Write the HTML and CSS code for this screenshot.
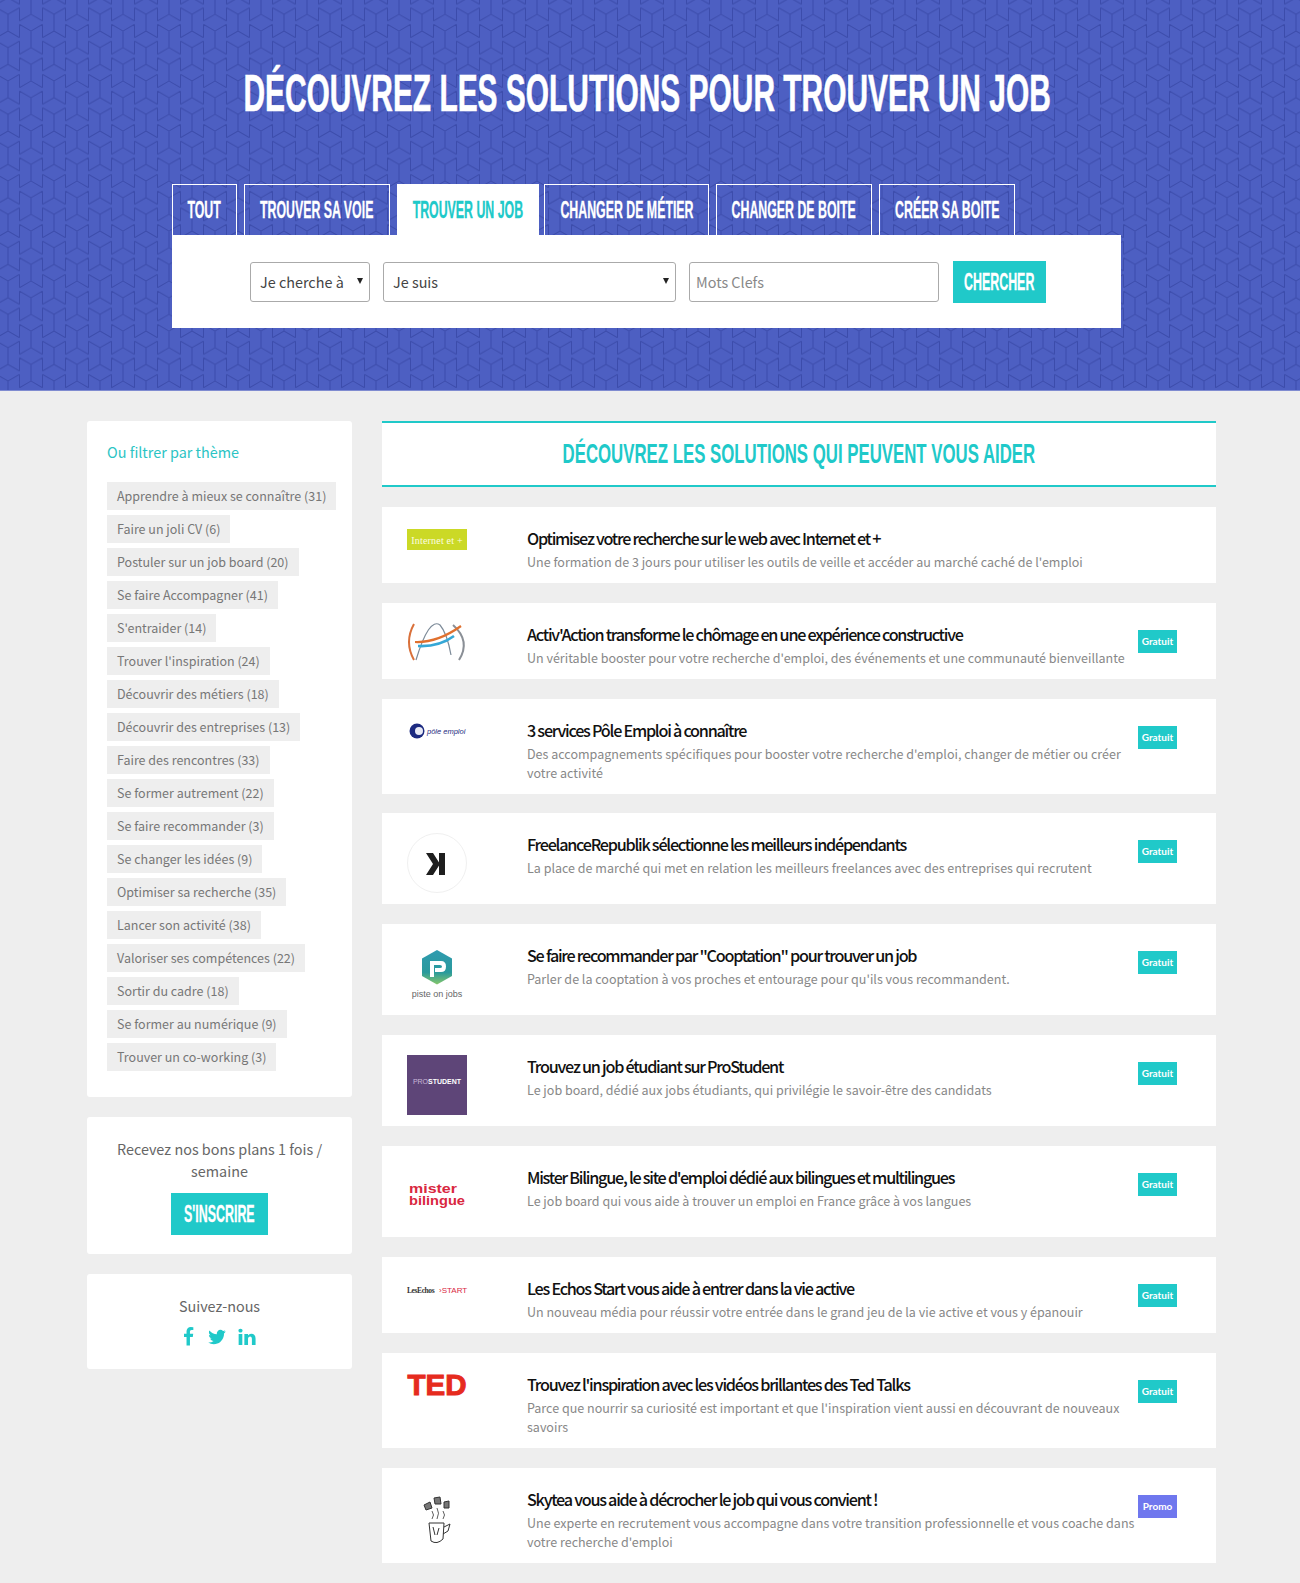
FILE: index.html
```html
<!DOCTYPE html>
<html lang="fr">
<head>
<meta charset="utf-8">
<title>Trouver un job</title>
<link rel="stylesheet" href="styles.css">
</head>
<body>
<header class="hero">
  <svg class="hero-pattern" width="100%" height="100%" aria-hidden="true">
    <defs>
      <path id="tri" fill="none" stroke="#3c4cab" stroke-width="1" d="M-11.5 -6.64L0 0L11.5 -6.64M0 0V16.67M-11.5 23.3L0 16.67L11.5 23.3M11.5 -6.64V6.64M-11.5 -6.64V6.64"/>
      <pattern id="ys" width="46" height="33.34" patternUnits="userSpaceOnUse" patternTransform="translate(31 31)">
        <use href="#tri" x="0" y="0"/><use href="#tri" x="46" y="0"/>
        <use href="#tri" x="0" y="33.34"/><use href="#tri" x="46" y="33.34"/>
        <use href="#tri" x="0" y="-33.34"/><use href="#tri" x="46" y="-33.34"/>
        <use href="#tri" x="23" y="16.67"/><use href="#tri" x="23" y="-16.67"/>
        <use href="#tri" x="23" y="50.01"/><use href="#tri" x="-23" y="16.67"/><use href="#tri" x="69" y="16.67"/>
      </pattern>
      <linearGradient id="pisteg" x1="0" y1="0" x2="0" y2="1">
        <stop offset="0" stop-color="#2f9bb0"/><stop offset=".65" stop-color="#2a9a9c"/><stop offset="1" stop-color="#86c76a"/>
      </linearGradient>
    </defs>
    <rect width="100%" height="100%" fill="url(#ys)"/>
  </svg>
  <h1 class="hero-title"><span class="sq sq-h1">DÉCOUVREZ LES SOLUTIONS POUR TROUVER UN JOB</span></h1>
  <nav class="tabs">
    <a class="tab"><span class="sq sq-tab">TOUT</span></a>
    <a class="tab"><span class="sq sq-tab">TROUVER SA VOIE</span></a>
    <a class="tab tab-active"><span class="sq sq-tab">TROUVER UN JOB</span></a>
    <a class="tab"><span class="sq sq-tab">CHANGER DE MÉTIER</span></a>
    <a class="tab"><span class="sq sq-tab">CHANGER DE BOITE</span></a>
    <a class="tab"><span class="sq sq-tab">CRÉER SA BOITE</span></a>
  </nav>
  <form class="search">
    <label class="field field-a"><span>Je cherche à</span><i class="caret"></i></label>
    <label class="field field-b"><span>Je suis</span><i class="caret"></i></label>
    <input class="keywords" type="text" placeholder="Mots Clefs">
    <button class="btn btn-search" type="button"><span class="sq sq-btn">CHERCHER</span></button>
  </form>
</header>

<div class="page">
  <aside class="side">
    <section class="box box-filter">
      <h2 class="filter-title">Ou filtrer par thème</h2>
      <ul class="chips">
        <li class="chip">Apprendre à mieux se connaître (31)</li>
        <li class="chip">Faire un joli CV (6)</li>
        <li class="chip">Postuler sur un job board (20)</li>
        <li class="chip">Se faire Accompagner (41)</li>
        <li class="chip">S'entraider (14)</li>
        <li class="chip">Trouver l'inspiration (24)</li>
        <li class="chip">Découvrir des métiers (18)</li>
        <li class="chip">Découvrir des entreprises (13)</li>
        <li class="chip">Faire des rencontres (33)</li>
        <li class="chip">Se former autrement (22)</li>
        <li class="chip">Se faire recommander (3)</li>
        <li class="chip">Se changer les idées (9)</li>
        <li class="chip">Optimiser sa recherche (35)</li>
        <li class="chip">Lancer son activité (38)</li>
        <li class="chip">Valoriser ses compétences (22)</li>
        <li class="chip">Sortir du cadre (18)</li>
        <li class="chip">Se former au numérique (9)</li>
        <li class="chip">Trouver un co-working (3)</li>
      </ul>
    </section>
    <section class="box box-news">
      <p class="box-text">Recevez nos bons plans 1 fois / semaine</p>
      <button class="btn btn-sub" type="button"><span class="sq sq-btn">S'INSCRIRE</span></button>
    </section>
    <section class="box box-follow">
      <p class="box-text">Suivez-nous</p>
      <div class="socials">
        <svg class="soc soc-f" viewBox="600 0 800 1792"><path d="M1343 12v264h-157q-86 0-116 36t-30 108v189h293l-39 296h-254v759h-306v-759h-255v-296h255v-218q0-186 104-288.5t277-102.5q147 0 228 12z"/></svg>
        <svg class="soc" viewBox="0 0 1792 1792"><path d="M1684 408q-67 98-162 167 1 14 1 42 0 130-38 259.5t-115.5 248.5-184.5 210.5-258 146-323 54.5q-271 0-496-145 35 4 78 4 225 0 401-138-105-2-188-64.5t-114-159.5q33 5 61 5 43 0 85-11-112-23-185.5-111.5t-73.5-205.5v-4q68 38 146 41-66-44-105-115t-39-154q0-88 44-163 121 149 294.5 238.5t371.5 99.5q-8-38-8-74 0-134 94.5-228.5t228.5-94.5q140 0 236 102 109-21 200-76-35 109-138 169 84-9 168-45z"/></svg>
        <svg class="soc soc-in" viewBox="0 0 1792 1792"><path d="M477 625v991h-330v-991h330zm21-306q1 73-50.5 122t-135.5 49h-2q-82 0-132-49t-50-122q0-74 51.5-122.5t134.5-48.5 133 48.5 51 122.5zm1166 729v568h-329v-530q0-105-40.5-164.5t-126.5-59.5q-63 0-105.5 34.5t-63.5 85.5q-11 30-11 81v553h-329q2-399 2-647t-1-296l-1-48h329v144h-2q20-32 41-56t56.5-52 87-43.5 114.5-15.5q171 0 275 113.5t104 332.5z"/></svg>
      </div>
    </section>
  </aside>

  <main class="results">
    <h2 class="results-head"><span class="sq sq-h2">DÉCOUVREZ LES SOLUTIONS QUI PEUVENT VOUS AIDER</span></h2>

    <article class="card">
      <svg class="logo logo-internet" viewBox="0 0 60 21"><rect width="60" height="21" fill="#cbd926"/><text x="30" y="14.5" text-anchor="middle" class="lg-internet">Internet et +</text></svg>
      <div class="info"><h3>Optimisez votre recherche sur le web avec Internet et +</h3><p>Une formation de 3 jours pour utiliser les outils de veille et accéder au marché caché de l'emploi</p></div>
    </article>

    <article class="card">
      <svg class="logo logo-activ" viewBox="0 0 60 38" fill="none"><path d="M7 1Q-3 19 7 37" stroke="#d9703a" stroke-width="2"/><path d="M9 37Q22 -6 33 2Q40 10 44 32" stroke="#7d8b99" stroke-width="1.2"/><path d="M46 2Q64 18 52 37" stroke="#8a8f96" stroke-width="2"/><path d="M8 19Q30 20 54 3" stroke="#e0702e" stroke-width="2.2"/><path d="M11 23Q32 24 47 13" stroke="#35a7d6" stroke-width="2.600"/></svg>
      <div class="info"><h3>Activ'Action transforme le chômage en une expérience constructive</h3><p>Un véritable booster pour votre recherche d'emploi, des événements et une communauté bienveillante</p></div>
      <span class="badge">Gratuit</span>
    </article>

    <article class="card card-pole">
      <svg class="logo logo-pole" viewBox="0 0 56 16"><circle cx="8" cy="8" r="7.5" fill="#1c2a80"/><circle cx="10" cy="8" r="4" fill="#e8eaf5"/><text x="18" y="11" class="lg-pole">pôle emploi</text></svg>
      <div class="info"><h3>3 services Pôle Emploi à connaître</h3><p>Des accompagnements spécifiques pour booster votre recherche d'emploi, changer de métier ou créer votre activité</p></div>
      <span class="badge">Gratuit</span>
    </article>

    <article class="card card-tall">
      <svg class="logo logo-k" viewBox="0 0 60 60"><circle cx="30" cy="30" r="29.5" fill="#fff" stroke="#f0f0f0"/><path d="M19 20h7l7 11-7 11h-7l7-11zM32 20h6v22h-6z" fill="#1e1e1e"/></svg>
      <div class="info"><h3>FreelanceRepublik sélectionne les meilleurs indépendants</h3><p>La place de marché qui met en relation les meilleurs freelances avec des entreprises qui recrutent</p></div>
      <span class="badge">Gratuit</span>
    </article>

    <article class="card card-tall">
      <svg class="logo logo-piste" viewBox="0 0 60 50"><path d="M30 0L45 8.500V26L30 34.500L15 26V8.500Z" fill="url(#pisteg)"/><path d="M23 27V11H34Q39 11 39 16.500Q39 22 34 22H28V18H33Q35 18 35 16.500Q35 15 33 15H27V27Z" fill="#fff"/><text x="30" y="47" text-anchor="middle" class="lg-piste">piste on jobs</text></svg>
      <div class="info"><h3>Se faire recommander par "Cooptation" pour trouver un job</h3><p>Parler de la cooptation à vos proches et entourage pour qu'ils vous recommandent.</p></div>
      <span class="badge">Gratuit</span>
    </article>

    <article class="card card-tall">
      <svg class="logo logo-pro" viewBox="0 0 60 60"><rect width="60" height="60" fill="#5e4578"/><text x="30" y="29" text-anchor="middle" class="lg-pro"><tspan class="lg-pro-light">PRO</tspan>STUDENT</text></svg>
      <div class="info"><h3>Trouvez un job étudiant sur ProStudent</h3><p>Le job board, dédié aux jobs étudiants, qui privilégie le savoir-être des candidats</p></div>
      <span class="badge">Gratuit</span>
    </article>

    <article class="card card-tall">
      <svg class="logo logo-mister" viewBox="0 0 60 27"><text x="2" y="10" textLength="48" lengthAdjust="spacingAndGlyphs" class="lg-mister">mister</text><text x="2" y="22" textLength="56" lengthAdjust="spacingAndGlyphs" class="lg-mister">bilingue</text></svg>
      <div class="info"><h3>Mister Bilingue, le site d'emploi dédié aux bilingues et multilingues</h3><p>Le job board qui vous aide à trouver un emploi en France grâce à vos langues</p></div>
      <span class="badge">Gratuit</span>
    </article>

    <article class="card">
      <svg class="logo logo-echos" viewBox="0 0 60 8"><text x="0" y="7" class="lg-echos">LesEchos</text><text x="32" y="7" class="lg-start">›START</text></svg>
      <div class="info"><h3>Les Echos Start vous aide à entrer dans la vie active</h3><p>Un nouveau média pour réussir votre entrée dans le grand jeu de la vie active et vous y épanouir</p></div>
      <span class="badge">Gratuit</span>
    </article>

    <article class="card">
      <svg class="logo logo-ted" viewBox="0 0 60 22"><text x="30" y="21" text-anchor="middle" textLength="59" lengthAdjust="spacingAndGlyphs" class="lg-ted">TED</text></svg>
      <div class="info"><h3>Trouvez l'inspiration avec les vidéos brillantes des Ted Talks</h3><p>Parce que nourrir sa curiosité est important et que l'inspiration vient aussi en découvrant de nouveaux savoirs</p></div>
      <span class="badge">Gratuit</span>
    </article>

    <article class="card">
      <svg class="logo logo-sky" viewBox="0 0 30 48" fill="none" stroke="#333" stroke-width="1"><path d="M7 26H22L21 42Q15 48 9 44Z"/><path d="M22 30L28 27L26 34L21 37"/><path d="M11 30L13 38M17 31L15 38"/><path d="M10 22Q13 18 10 14M15 22Q18 16 15 11M21 22Q24 18 21 14" stroke-width=".8"/><path d="M2 8L8 5L10 11L4 13Z M12 1L18 0L19 7L13 7Z M22 5L27 4L27 11L22 11Z" fill="#777"/></svg>
      <div class="info"><h3>Skytea vous aide à décrocher le job qui vous convient !</h3><p>Une experte en recrutement vous accompagne dans votre transition professionnelle et vous coache dans votre recherche d'emploi</p></div>
      <span class="badge badge-promo">Promo</span>
    </article>
  </main>
</div>
</body>
</html>
```
FILE: styles.css
```css
* { box-sizing: border-box; }
html, body { margin: 0; padding: 0; }
body {
  background: #eeeeee;
  font-family: "Noto Sans CJK SC", "Noto Sans", sans-serif;
  color: #777;
  width: 1300px;
  overflow-x: hidden;
}
h1, h2, h3, p, ul { margin: 0; padding: 0; }

.sq {
  display: inline-block;
  flex-shrink: 0;
  white-space: nowrap;
  font-family: "Liberation Sans", sans-serif;
  font-weight: 700;
  line-height: 1;
  transform-origin: center;
}
.sq-h1 { font-size: 52px; transform: scaleX(.575); -webkit-text-stroke: .6px #fff; }
.sq-tab { font-size: 23px; transform: scaleX(.537); -webkit-text-stroke: .3px currentColor; }
.sq-btn { font-size: 23px; transform: scaleX(.54); -webkit-text-stroke: .3px #fff; }
.sq-h2 { font-size: 28px; transform: scaleX(.6); }

.hero {
  position: relative;
  height: 391px;
  background: #4d5fc2;
  padding-top: 60px;
  border-bottom: 1px solid #7f8bd0;
}
.hero-pattern { position: absolute; left: 0; top: 0; }
.hero-title {
  position: relative;
  height: 66px;
  margin-bottom: 58px;
  padding-right: 6px;
  color: #fff;
  display: flex;
  align-items: center;
  justify-content: center;
}
.tabs {
  position: relative;
  margin-left: 172px;
  display: grid;
  grid-template-columns: 65px 146px 140px 165px 156px 136px;
  column-gap: 7px;
  height: 51px;
}
.tab {
  display: flex;
  align-items: center;
  justify-content: center;
  border: 1px solid #fff;
  border-bottom: 0;
  color: #fff;
  overflow: hidden;
}
.tab-active {
  background: #fff;
  color: #20c9c9;
  margin-right: -2px;
}
.search {
  position: relative;
  margin-left: 172px;
  width: 949px;
  height: 93px;
  background: #fff;
  padding: 26px 0 0 78px;
  display: flex;
  align-items: flex-start;
  gap: 13px;
}
.field {
  position: relative;
  display: flex;
  align-items: center;
  height: 40px;
  margin-top: 1px;
  border: 1px solid #aaa;
  border-radius: 3px;
  background: #fff;
  color: #444;
  font-size: 14.4px;
  padding: 0 0 2px 9px;
}
.field-a { width: 120px; }
.field-b { width: 293px; }
.caret {
  position: absolute;
  right: 6px;
  top: 15px;
  border-left: 3px solid transparent;
  border-right: 3px solid transparent;
  border-top: 6px solid #222;
}
.keywords {
  width: 250px;
  height: 40px;
  margin-top: 1px;
  border: 1px solid #aaa;
  border-radius: 3px;
  font: 14.4px "Noto Sans CJK SC", "Noto Sans", sans-serif;
  padding: 0 6px 2px;
  color: #444;
}
.keywords::placeholder { color: #888; opacity: 1; }
.btn {
  display: flex;
  align-items: center;
  justify-content: center;
  border: 0;
  padding: 0;
  background: #20c9c9;
  color: #fff;
  overflow: hidden;
}
.btn-search { width: 93px; height: 42px; margin-left: 1px; }
.btn-sub { width: 97px; height: 42px; margin: 0 auto; }

.page {
  display: flex;
  align-items: flex-start;
  gap: 30px;
  padding: 30px 0 20px 87px;
}
.side { width: 265px; display: flex; flex-direction: column; gap: 20px; flex-shrink: 0; }
.box { background: #fff; border-radius: 3px; }
.box-filter { height: 676px; padding: 20px 20px 0; }
.filter-title {
  font-size: 14.4px;
  font-weight: 400;
  line-height: 22px;
  color: #2bc4c4;
  margin-bottom: 19px;
}
.chips { list-style: none; display: flex; flex-direction: column; align-items: flex-start; gap: 5px; }
.chip {
  height: 28px;
  line-height: 27px;
  padding: 0 10px;
  background: #eeeeee;
  font-size: 12.5px;
  color: #777;
  white-space: nowrap;
}
.box-news { height: 137px; padding: 21px 20px 0; text-align: center; }
.box-follow { height: 95px; padding: 21px 20px 0; text-align: center; }
.box-text { font-size: 14.4px; line-height: 22px; color: #666; }
.box-news .box-text { margin-bottom: 11px; }
.socials { display: flex; justify-content: center; align-items: center; gap: 12px; margin-top: 10px; padding-left: 2px; }
.soc { width: 20px; height: 20px; fill: #20c9c9; }
.soc-f { width: 11px; }
.soc-in { margin-left: -2px; }

.results { width: 834px; display: flex; flex-direction: column; gap: 20px; }
.results-head {
  height: 66px;
  background: #fff;
  border-top: 2px solid #20c9c9;
  border-bottom: 2px solid #20c9c9;
  color: #20c9c9;
  font-weight: 400;
  display: flex;
  align-items: center;
  justify-content: center;
}
.card {
  background: #fff;
  display: flex;
  align-items: flex-start;
  padding: 20px 39px 11px 25px;
}
.card-pole { margin-bottom: -.6px; }
.card-tall { min-height: 91px; }
.logo { width: 60px; flex-shrink: 0; display: block; overflow: visible; }
.info { margin-left: 60px; width: 613px; flex-shrink: 0; }
.info h3 {
  font-size: 16.2px;
  font-weight: 500;
  line-height: 22px;
  margin-bottom: 3px;
  letter-spacing: -1.25px;
  color: #111;
  white-space: nowrap;
}
.info p {
  font-size: 12.53px;
  line-height: 19px;
  color: #888;
  margin-bottom: 1px;
}
.badge {
  width: 39px;
  height: 23px;
  margin: 7px 0 0 -2px;
  background: #20c9c9;
  color: #fff;
  font-family: Lato, sans-serif;
  font-weight: 700;
  font-size: 10px;
  line-height: 23px;
  text-align: center;
  flex-shrink: 0;
}
.badge-promo { background: #6f77ee; }

.logo-internet { height: 21px; margin-top: 2px; }
.logo-activ { height: 38px; }
.logo-pole { height: 16px; margin-top: 4px; }
.logo-k { height: 60px; margin-bottom: -1px; }
.logo-piste { height: 50px; margin-top: 6px; }
.logo-pro { height: 60px; margin-bottom: -1px; }
.logo-mister { height: 27px; margin-top: 17px; }
.logo-echos { height: 8px; margin-top: 9px; }
.logo-ted { height: 22px; margin-top: 1px; }
.logo-sky { height: 48px; margin-top: 9px; }

.lg-internet { font: 10px "Liberation Serif", serif; fill: #fbfde0; letter-spacing: .2px; }
.lg-pole { font: italic 7.500px "Liberation Sans", sans-serif; fill: #1c2a80; }
.lg-piste { font: 9px "Liberation Sans", sans-serif; fill: #666; }
.lg-pro { font: 700 7px "Liberation Sans", sans-serif; fill: #fff; }
.lg-pro-light { font-weight: 400; fill: #c9b9d8; }
.lg-mister { font: 700 13px "Liberation Sans", sans-serif; fill: #d9283f; }
.lg-echos { font: 700 7.500px "Liberation Serif", serif; fill: #333; letter-spacing: -.4px; }
.lg-start { font: 8px "Liberation Sans", sans-serif; fill: #d9283f; }
.lg-ted { font: 700 29px "Liberation Sans", sans-serif; fill: #e62b1e; stroke: #e62b1e; stroke-width: 1px; }
```
